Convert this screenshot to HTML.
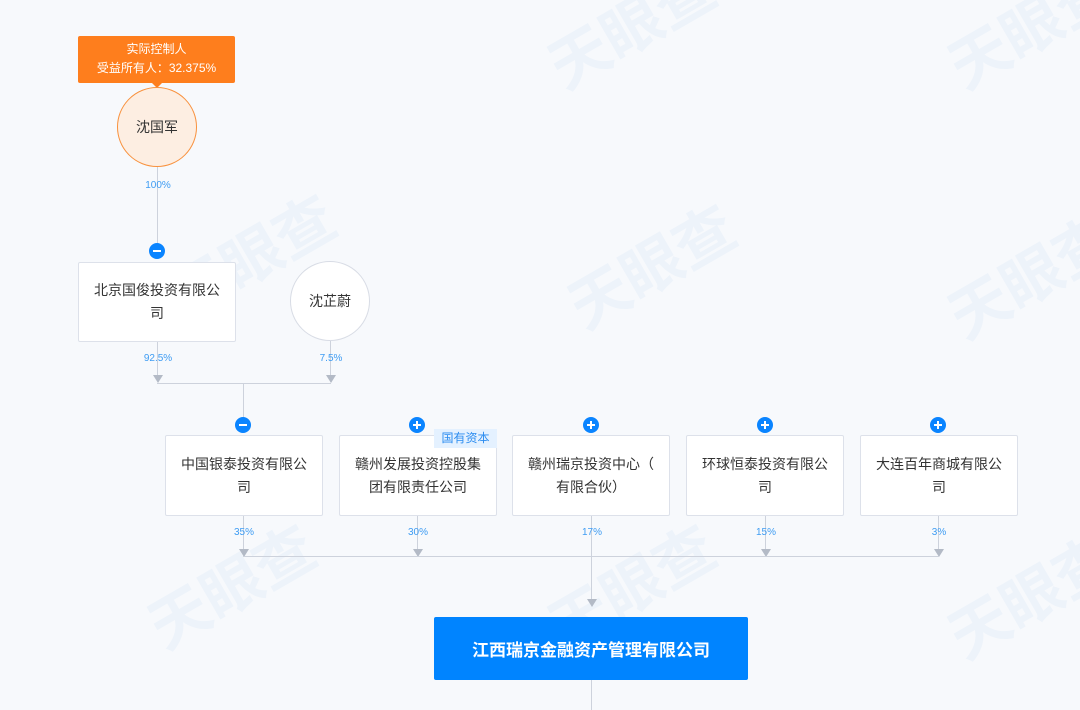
<!DOCTYPE html>
<html><head><meta charset="utf-8"><style>
body{margin:0;width:1080px;height:710px;background:#f7f9fc;position:relative;overflow:hidden;font-family:"Liberation Sans","Noto Sans CJK SC",sans-serif;}
.a{position:absolute}
.box{position:absolute;width:155px;height:78px;background:#fff;border:1px solid #dde1ea;border-radius:2px;box-sizing:content-box;display:flex;align-items:center;justify-content:center;text-align:center;font-size:14px;line-height:23px;color:#333;padding:0 6px;box-sizing:border-box;}
.circ{position:absolute;width:80px;height:80px;border-radius:50%;display:flex;align-items:center;justify-content:center;font-size:14px;color:#333;box-sizing:border-box}
.pct{position:absolute;font-size:10px;color:#3e9cf3;transform:translateX(-50%)}
.v{position:absolute;width:1px;background:#cdd2dc}
.h{position:absolute;height:1px;background:#cdd2dc}
.arr{position:absolute;width:0;height:0;border-left:5px solid transparent;border-right:5px solid transparent;border-top:8px solid #b3bac6;transform:translateX(-5px)}
.ic{position:absolute;width:16px;height:16px;border-radius:50%;background:#0a84ff;transform:translate(-8px,-8px)}
.ic:before{content:"";position:absolute;left:4px;top:7px;width:8px;height:2px;background:#fff}
.ic.p:after{content:"";position:absolute;left:7px;top:4px;width:2px;height:8px;background:#fff}
.wm{position:absolute;font-size:60px;font-weight:bold;color:rgba(120,170,220,0.07);transform:rotate(-30deg);white-space:nowrap}
</style></head><body>
<div class="wm" style="left:160px;top:210px">天眼查</div>
<div class="wm" style="left:560px;top:220px">天眼查</div>
<div class="wm" style="left:940px;top:230px">天眼查</div>
<div class="wm" style="left:140px;top:540px">天眼查</div>
<div class="wm" style="left:540px;top:540px">天眼查</div>
<div class="wm" style="left:940px;top:550px">天眼查</div>
<div class="wm" style="left:540px;top:-20px">天眼查</div>
<div class="wm" style="left:940px;top:-20px">天眼查</div>

<!-- top -->
<div class="a" style="left:78px;top:36px;width:157px;height:47px;background:#fe7e1d;border-radius:2px;color:#fff;font-size:12px;line-height:19px;text-align:center;padding-top:4px;box-sizing:border-box">实际控制人<br>受益所有人：32.375%</div>
<div class="a" style="left:152px;top:83px;width:0;height:0;border-left:5px solid transparent;border-right:5px solid transparent;border-top:5px solid #fe7e1d"></div>
<div class="circ" style="left:117px;top:87px;background:#fdeee2;border:1px solid #f8913d">沈国军</div>
<div class="v" style="left:157px;top:167px;height:78px"></div>
<div class="pct" style="left:158px;top:180px">100%</div>
<div class="ic" style="left:157px;top:251px"></div>
<div class="box" style="left:78px;top:262px;width:158px;height:80px">北京国俊投资有限公<br>司</div>
<div class="circ" style="left:290px;top:261px;background:#fff;border:1px solid #d8dce5">沈芷蔚</div>

<div class="v" style="left:157px;top:342px;height:35px"></div>
<div class="v" style="left:330px;top:341px;height:36px"></div>
<div class="pct" style="left:158px;top:353px">92.5%</div>
<div class="pct" style="left:331px;top:353px">7.5%</div>
<div class="arr" style="left:158px;top:375px"></div>
<div class="arr" style="left:331px;top:375px"></div>
<div class="h" style="left:157px;top:383px;width:174px"></div>
<div class="v" style="left:243px;top:383px;height:36px"></div>

<!-- row -->
<div class="ic" style="left:243px;top:425px"></div>
<div class="ic p" style="left:417px;top:425px"></div>
<div class="ic p" style="left:591px;top:425px"></div>
<div class="ic p" style="left:765px;top:425px"></div>
<div class="ic p" style="left:938px;top:425px"></div>
<div class="box" style="left:165px;top:435px;width:158px;height:81px">中国银泰投资有限公<br>司</div>
<div class="box" style="left:339px;top:435px;width:158px;height:81px">赣州发展投资控股集<br>团有限责任公司</div>
<div class="a" style="left:434px;top:429px;width:63px;height:19px;background:#e4f1ff;color:#2b8cf0;font-size:12px;line-height:19px;text-align:center">国有资本</div>
<div class="box" style="left:512px;top:435px;width:158px;height:81px">赣州瑞京投资中心（<br>有限合伙）</div>
<div class="box" style="left:686px;top:435px;width:158px;height:81px">环球恒泰投资有限公<br>司</div>
<div class="box" style="left:860px;top:435px;width:158px;height:81px">大连百年商城有限公<br>司</div>

<div class="v" style="left:243px;top:516px;height:33px"></div>
<div class="v" style="left:417px;top:516px;height:33px"></div>
<div class="v" style="left:591px;top:516px;height:86px"></div>
<div class="v" style="left:765px;top:516px;height:33px"></div>
<div class="v" style="left:938px;top:516px;height:33px"></div>
<div class="pct" style="left:244px;top:527px">35%</div>
<div class="pct" style="left:418px;top:527px">30%</div>
<div class="pct" style="left:592px;top:527px">17%</div>
<div class="pct" style="left:766px;top:527px">15%</div>
<div class="pct" style="left:939px;top:527px">3%</div>
<div class="arr" style="left:244px;top:549px"></div>
<div class="arr" style="left:418px;top:549px"></div>
<div class="arr" style="left:766px;top:549px"></div>
<div class="arr" style="left:939px;top:549px"></div>
<div class="h" style="left:243px;top:556px;width:696px"></div>
<div class="arr" style="left:592px;top:599px"></div>

<div class="a" style="left:434px;top:617px;width:314px;height:63px;background:#0084ff;border-radius:2px;color:#fff;font-size:17px;font-weight:bold;display:flex;align-items:center;justify-content:center">江西瑞京金融资产管理有限公司</div>
<div class="v" style="left:591px;top:680px;height:30px"></div>
</body></html>
